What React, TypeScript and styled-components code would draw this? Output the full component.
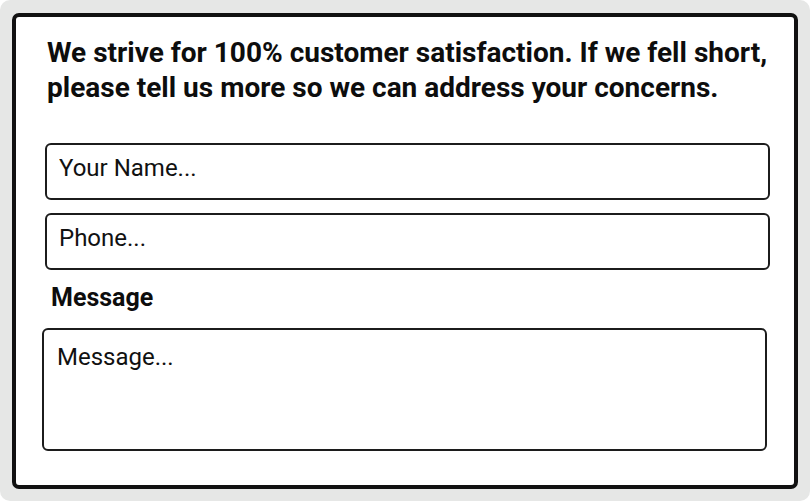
import styled, { createGlobalStyle } from "styled-components";

const GlobalStyle = createGlobalStyle`
  html, body {
    margin: 0;
    padding: 0;
    background: #ffffff;
  }
  body {
    font-family: Roboto, "Liberation Sans", Arial, sans-serif;
    color: #111;
  }
`;

const Page = styled.div`
  width: 810px;
  height: 501px;
  box-sizing: border-box;
  padding: 13px 12px 12px 12px;
  background: #e6e7e6;
  border-radius: 10px;
`;

const Card = styled.form`
  height: 100%;
  box-sizing: border-box;
  display: flex;
  flex-direction: column;
  padding: 18px 24px 0 29px;
  background: #fff;
  border: 4px solid #111;
  border-radius: 7px;
`;

const Heading = styled.h2`
  margin: 0 0 38px 2px;
  font-size: 28px;
  line-height: 35px;
  font-weight: 700;
  color: #0d0d0d;
`;

const Fields = styled.div`
  display: flex;
  flex-direction: column;
  gap: 13px;
`;

const TextInput = styled.input`
  width: 100%;
  height: 57px;
  box-sizing: border-box;
  padding: 0 12px 8px;
  border: 2px solid #1c1c1c;
  border-radius: 6px;
  font-family: inherit;
  font-size: 24px;
  color: #111;
  outline: none;

  &::placeholder {
    color: #111;
    opacity: 1;
  }
`;

const Label = styled.label`
  display: block;
  margin: 13px 0 0 6px;
  font-size: 25px;
  line-height: 30px;
  font-weight: 700;
  color: #0d0d0d;
`;

const MessageBox = styled.textarea`
  width: 100%;
  height: 123px;
  box-sizing: border-box;
  margin: 15px 0 0 -3px;
  padding: 13px 13px;
  border: 2px solid #1c1c1c;
  border-radius: 6px;
  font-family: inherit;
  font-size: 24px;
  line-height: 28px;
  color: #111;
  resize: none;
  outline: none;

  &::placeholder {
    color: #111;
    opacity: 1;
  }
`;

function App() {
  return (
    <>
      <GlobalStyle />
      <Page>
        <Card onSubmit={(e) => e.preventDefault()}>
          <Heading>
            We strive for 100% customer satisfaction. If we fell short,
            <br />
            please tell us more so we can address your concerns.
          </Heading>
          <Fields>
            <TextInput type="text" placeholder="Your Name..." />
            <TextInput type="tel" placeholder="Phone..." />
          </Fields>
          <Label htmlFor="message">Message</Label>
          <MessageBox id="message" placeholder="Message..." />
        </Card>
      </Page>
    </>
  );
}

export default App;
